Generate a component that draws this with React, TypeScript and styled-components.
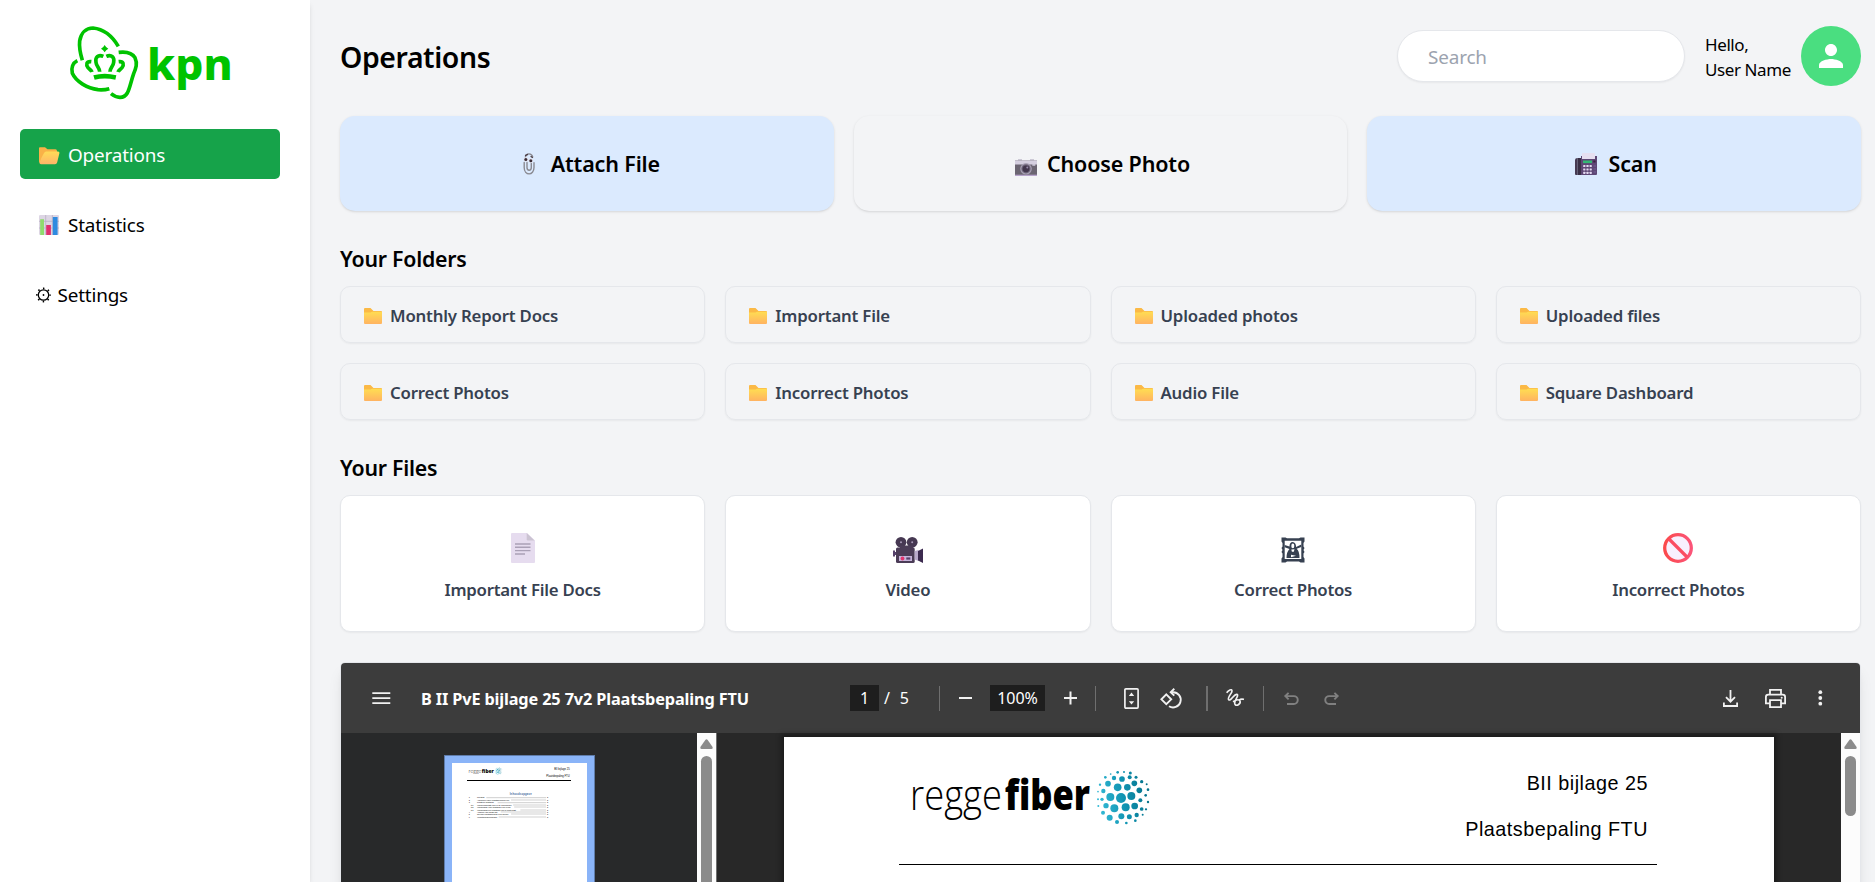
import React from 'react';
import styled, { createGlobalStyle } from 'styled-components';

const UI = '"Noto Sans", "Open Sans", sans-serif';
const INK = '#f1f1f1';

const Global = createGlobalStyle`
  *, *::before, *::after { box-sizing: border-box; }
  body { margin: 0; background: #f3f4f6; font-family: ${UI}; color: #000; overflow: hidden; }
  svg { display: block; flex: none; overflow: visible; }
`;

/* ---------- page frame ---------- */

const Page = styled.div`
  display: flex;
  height: 882px;
  overflow: hidden;
`;
const Sidebar = styled.aside`
  flex: none;
  width: 310px;
  padding: 26px 30px 0 20px;
  background: #fff;
  box-shadow: 0 4px 6px -1px rgba(0, 0, 0, 0.1), 0 2px 4px -2px rgba(0, 0, 0, 0.1);
`;
const Brand = styled.div`
  display: flex;
  padding-left: 49px;
  height: 103px;
`;
const Nav = styled.nav`
  display: flex;
  flex-direction: column;
  gap: 20px;
`;
const NavItem = styled.a<{ $active?: boolean; $tight?: boolean }>`
  display: flex;
  align-items: center;
  gap: ${(p) => (p.$tight ? 5.5 : 8)}px;
  height: 50px;
  padding: 1px 0 0 ${(p) => (p.$tight ? 16 : 19)}px;
  border-radius: 5px;
  background: ${(p) => (p.$active ? '#16a34a' : 'transparent')};
  color: ${(p) => (p.$active ? '#fff' : '#000')};
  font-size: 18.9px;
  letter-spacing: -0.18px;
`;

const Main = styled.main`
  flex: 1;
  min-width: 0;
  padding: 26px 14px 0 30px;
`;
const Header = styled.header`
  display: flex;
  align-items: center;
  height: 60px;
`;
const Title = styled.h1`
  flex: 1;
  margin: 0;
  padding-top: 2px;
  font-size: 28.4px;
  font-weight: 600;
  line-height: 40px;
  letter-spacing: -0.4px;
`;
const Search = styled.input`
  width: 288px;
  height: 52px;
  padding: 1px 30px 0;
  border: 1px solid #e5e7eb;
  border-radius: 26px;
  background: #fff;
  box-shadow: 0 1px 2px rgba(0, 0, 0, 0.05);
  font: 400 18.9px ${UI};
  letter-spacing: -0.15px;
  outline: none;
  &::placeholder { color: #9ca3af; opacity: 1; }
`;
const Greeting = styled.div`
  width: 96px;
  margin-left: 20px;
  padding-top: 2px;
  font-size: 17px;
  line-height: 25px;
  letter-spacing: -0.4px;
  white-space: nowrap;
`;
const Avatar = styled.div`
  display: flex;
  align-items: center;
  justify-content: center;
  width: 60px;
  height: 60px;
  border-radius: 50%;
  background: #4ade80;
`;

/* ---------- cards ---------- */

const Grid = styled.div<{ $cols: number }>`
  display: grid;
  grid-template-columns: repeat(${(p) => p.$cols}, 1fr);
  gap: 20px;
`;
const Actions = styled(Grid)`
  margin-top: 30px;
`;
const ActionCard = styled.button<{ $tint?: boolean; $gap: number }>`
  display: flex;
  align-items: center;
  justify-content: center;
  gap: ${(p) => p.$gap}px;
  height: 95px;
  padding: 0 0 0 4px;
  border: 0;
  border-radius: 15px;
  background: ${(p) => (p.$tint ? '#dbeafe' : '#f3f4f6')};
  box-shadow: 0 1px 3px rgba(0, 0, 0, 0.1), 0 1px 2px -1px rgba(0, 0, 0, 0.1);
  font: 590 21.5px ${UI};
  letter-spacing: -0.15px;
  color: #000;
`;
const SectionTitle = styled.h2`
  margin: 30px 0 9px;
  font-size: 21.3px;
  font-weight: 590;
  line-height: 36px;
  letter-spacing: -0.25px;
`;
const FolderCard = styled.div`
  display: flex;
  align-items: center;
  gap: 8px;
  height: 57px;
  padding: 1px 23px 0;
  border: 1px solid #e5e7eb;
  border-radius: 10px;
  box-shadow: 0 1px 2px rgba(0, 0, 0, 0.05);
  font-size: 16.8px;
  font-weight: 580;
  letter-spacing: -0.19px;
  color: #374151;
`;
const FileCard = styled.div`
  display: flex;
  flex-direction: column;
  align-items: center;
  height: 137px;
  padding-top: 36px;
  border: 1px solid #e5e7eb;
  border-radius: 10px;
  background: #fff;
  box-shadow: 0 1px 2px rgba(0, 0, 0, 0.05);
  font-size: 16.8px;
  font-weight: 580;
  line-height: 27px;
  letter-spacing: -0.25px;
  color: #374151;
`;
const FileIcon = styled.div`
  display: flex;
  height: 44px;
  padding-top: 0.5px;
`;

/* ---------- document viewer ---------- */

const Viewer = styled.section`
  margin-top: 30px;
  border: 1px solid #e5e7eb;
  border-radius: 5px;
  overflow: hidden;
  box-shadow: 0 10px 15px -3px rgba(0, 0, 0, 0.1), 0 4px 6px -4px rgba(0, 0, 0, 0.1);
  height: 720px;
`;
const Toolbar = styled.div`
  display: flex;
  align-items: center;
  height: 70px;
  background: #3c3c3c;
  color: #fff;
  font-size: 16px;
  letter-spacing: -0.1px;
`;
const ToolStart = styled.div`
  display: flex;
  align-items: center;
  gap: 30px;
  width: 509px;
  padding-left: 31px;
`;
const DocName = styled.div`
  padding-top: 1px;
  font-size: 16.3px;
  font-weight: 700;
  letter-spacing: -0.14px;
  line-height: 24px;
`;
const ToolMiddle = styled.div`
  display: flex;
  align-items: center;
  flex: 1;
`;
const Field = styled.div<{ $w: number }>`
  width: ${(p) => p.$w}px;
  height: 26px;
  background: #1e1e1e;
  color: #fff;
  line-height: 26px;
  text-align: center;
`;
const PageTotal = styled.div`
  display: flex;
  gap: 10px;
  width: 60px;
  padding-left: 5px;
  line-height: 26px;
`;
const Rule = styled.div<{ $w?: number }>`
  width: ${(p) => p.$w ?? 1}px;
  height: 25px;
  background: #6f6f6f;
`;
const Tool = styled.div<{ $ml: number; $dim?: boolean }>`
  margin-left: ${(p) => p.$ml}px;
  color: ${(p) => (p.$dim ? '#808080' : INK)};
`;
const ToolEnd = styled.div`
  display: flex;
  align-items: center;
  gap: 27px;
  padding-right: 37px;
  color: ${INK};
`;
const Panes = styled.div`
  display: flex;
  height: 650px;
`;
const Thumbs = styled.div`
  display: flex;
  justify-content: center;
  align-items: flex-start;
  width: 356px;
  padding: 22px 0 0 1px;
  background: #28292a;
`;
const Thumb = styled.div`
  border: 1px solid #5f7caa;
  width: 151px;
  height: 214px;
  padding: 7px;
  background: #8ab4f8;
`;
const Track = styled.div`
  display: flex;
  flex-direction: column;
  align-items: center;
  gap: 7px;
  width: 19px;
  padding-top: 6px;
  background: #fcfcfc;
`;
const Handle = styled.div<{ $h: number }>`
  width: 11px;
  height: ${(p) => p.$h}px;
  border-radius: 6px;
  background: #8b8b8b;
`;
const Canvas = styled.div`
  flex: 1;
  display: flex;
  justify-content: center;
  align-items: flex-start;
  padding: 4px 0 0;
  border-left: 1px solid #6f6f6f;
  background: #282828;
`;
const Sheet = styled.div`
  width: 990px;
  height: 700px;
  padding: 34px 117px 0 115px;
  background: #fff;
  box-shadow: 0 0 5px 3px rgba(0, 0, 0, 0.35);
`;
const SheetHead = styled.div`
  display: flex;
  justify-content: space-between;
  height: 94px;
  padding: 0 9px 0 13px;
  border-bottom: 1px solid #000;
`;
const SheetTitles = styled.div`
  margin-top: -11px;
  font: 19.8px/46px "Liberation Sans", Arial, sans-serif;
  letter-spacing: 0.5px;
  text-align: right;
`;

/* ---------- drawings ---------- */

const KpnLogo = () => (
  <svg width="164" height="74" viewBox="207 77 492 222">
    <g fill="none" stroke="#00c300" strokeWidth="11">
      <path d="M247 180C241 160 237 140 239 122C243 98 258 83 279 83C309 86 336 106 355 138" />
      <path d="M356 156C380 153 398 160 405 172C413 190 408 203 401 220C392 246 390 262 382 278C371 297 349 293 333 280" />
      <path d="M232 181C218 188 213 203 217 219C228 244 262 264 294 268C306 269 318 268 328 265" />
    </g>
    <g fill="#00c300">
      <path d="M314 134Q318 142 325 145Q318 148 314 156Q310 148 303 145Q310 142 314 134Z" />
      <path d="M280 225Q314 215 349 225L346 238Q314 231 284 238Z" />
    </g>
    <g fill="none" stroke="#00c300" strokeWidth="11">
      <path d="M310 168C294 161 285 171 288 186C289 198 299 203 299 214" />
      <path d="M319 168C335 161 344 171 341 186C340 198 330 203 330 214" />
      <path d="M274 184C258 182 258 194 264 202C269 208 274 209 276 215" />
      <path d="M356 184C372 182 372 194 366 202C361 208 356 209 354 215" />
    </g>
    <text x="441" y="240" fontFamily='"Noto Sans", sans-serif' fontWeight="800" fontSize="126" textLength="257" lengthAdjust="spacingAndGlyphs" fill="#00c300">kpn</text>
  </svg>
);

const OpenFolder = () => (
  <svg width="21" height="18" viewBox="0 0 21 18">
    <defs><linearGradient id="of" x1="0" y1="0" x2="0" y2="1"><stop offset="0" stopColor="#ffdb57" /><stop offset="1" stopColor="#ffb469" /></linearGradient></defs>
    <g transform="translate(0 1)">
      <path d="M0 1Q0 0.3 1 0.3H6L8.5 2.3H16.5Q18 2.3 18 4V16H2Q0 16 0 14.5Z" fill="#f9b248" />
      <path d="M7.2 4.6H19Q20.8 4.6 20.4 6.2L18.2 15.3Q17.7 17.3 16 17.3H2Q0.2 17.3 0.6 15.5L2.6 10.5Q3.6 8.5 4.8 6.6Q5.8 4.6 7.2 4.6Z" fill="url(#of)" />
    </g>
  </svg>
);
const BarChart = () => (
  <svg width="21" height="20" viewBox="0 0 21 20">
    <rect width="20" height="20" rx="1.2" fill="#ddd6e4" />
    <path d="M0 6.3H20M0 13H20M6.7 0V20M13.4 0V20" stroke="#b9b1c4" strokeWidth="0.8" />
    <path d="M1.2 4.2H5V20H1.2Z" fill="#8fdc6d" />
    <path d="M7.2 10H11.9V20H7.2Z" fill="#e0306e" />
    <path d="M13.8 2H18.6V20H13.8Z" fill="#2f8be0" />
  </svg>
);
const Gear = () => (
  <svg width="16" height="16" viewBox="0 0 16 16">
    <g fill="none" stroke="#000">
      <circle cx="7.5" cy="8" r="5.2" strokeWidth="1.3" />
      <circle cx="7.5" cy="8" r="6.6" strokeWidth="1.6" strokeDasharray="1.5 3.684" strokeDashoffset="0.75" />
    </g>
    <circle cx="7.5" cy="8" r="0.9" />
  </svg>
);
const Person = () => (
  <svg width="36" height="36" viewBox="0 0 24 24" fill="#fff">
    <path d="M12 12c2.21 0 4-1.79 4-4s-1.79-4-4-4-4 1.79-4 4 1.79 4 4 4zm0 2c-2.67 0-8 1.34-8 4v2h16v-2c0-2.66-5.33-4-8-4z" />
  </svg>
);
const Paperclip = () => (
  <svg width="22" height="22" viewBox="-5 0 22 22">
    <g fill="none" stroke="#8a8a92" strokeWidth="1.4" strokeLinecap="round">
      <path d="M1.2 9.5V14.5C1.2 23 11 23 11 14.5V9.8" />
      <path d="M4 9.5V14.5C4 18.2 8.3 18.2 8.3 14.5V10.5" />
      <path d="M2.4 4C3 0 8.6 -0.4 9.7 4" />
    </g>
    <circle cx="2.9" cy="6.4" r="2.2" fill="#e4e0e8" /><circle cx="7.8" cy="7.6" r="2.2" fill="#e4e0e8" />
    <circle cx="2.8" cy="6.4" r="1.5" fill="#3a2c35" /><circle cx="7.8" cy="7.7" r="1.5" fill="#3a2c35" />
    <path d="M2 2.6L5 1.4M7.6 3.2L9.8 4.8" stroke="#4a3c44" strokeWidth="1.2" />
  </svg>
);
const Camera = () => (
  <svg width="22" height="22" viewBox="0 0 22 22">
    <g transform="translate(0 6)">
      <path d="M3 1H7M15 1H19" stroke="#a59db3" strokeWidth="1.2" />
      <rect y="1.5" width="22" height="15.5" fill="#6b6572" />
      <rect y="1.5" width="22" height="4" fill="#d5cfe0" />
      <rect y="15.7" width="22" height="1.3" fill="#b6a3cb" />
      <rect x="17.3" y="5.2" width="3" height="1.5" fill="#d5cfe0" />
      <circle cx="11" cy="9.8" r="5.8" fill="#a8a0b5" />
      <circle cx="11" cy="9.8" r="4.6" fill="#6d6478" />
      <circle cx="11" cy="9.8" r="3.4" fill="#42364d" />
      <circle cx="12.3" cy="8.4" r="1" fill="#9588a8" />
    </g>
  </svg>
);
const Fax = () => (
  <svg width="22" height="22" viewBox="0 0 22 22">
    <path d="M0 7Q0 5 2.5 5V22H1Q0 22 0 21Z" fill="#463a52" />
    <rect x="2.5" y="5" width="3.5" height="17" fill="#3a2f45" />
    <path d="M6 3H22V21Q22 22 21 22H6Z" fill="#5e4775" />
    <rect x="7" width="13" height="6" rx="0.5" fill="#e6dff0" />
    <rect x="8" y="7.5" width="9" height="2.6" fill="#33b874" />
    <rect x="18.3" y="7.5" width="2.2" height="2" fill="#3a1f3d" />
    <g fill="#e3d8f0">
      {[12, 15.4, 18.8].map((y) => [8.2, 11.4, 14.6].map((x) => <rect key={`${x}-${y}`} x={x} y={y} width="2.2" height="2.1" rx="0.4" />))}
    </g>
    <path d="M18.6 13H21M18.6 16H21M18.6 19H21" stroke="#7c68a0" strokeWidth="0.8" />
  </svg>
);
const Folder = () => (
  <svg width="18" height="16" viewBox="0 0 18 16">
    <defs><linearGradient id="cf" x1="0" y1="0" x2="0" y2="1"><stop offset="0" stopColor="#ffdd52" /><stop offset="1" stopColor="#ffb361" /></linearGradient></defs>
    <g transform="translate(0 1)">
      <path d="M0 1Q0 0 1 0H6.5L9.5 3H17Q18 3 18 4V8H0Z" fill="#fbb946" />
      <path d="M0 4.6H6.5L8 3.8H17.2Q18 3.8 18 4.6V15Q18 16 17 16H1Q0 16 0 15Z" fill="url(#cf)" />
    </g>
  </svg>
);
const Doc = () => (
  <svg width="24" height="30" viewBox="0 0 24 30">
    <path d="M1 0H16L24 7.5V29Q24 30 23 30H1Q0 30 0 29V1Q0 0 1 0Z" fill="#e6dcef" />
    <path d="M15.7 0L23.5 7.5H17Q15.7 7.5 15.7 6.3Z" fill="#cbc3d2" />
    <path d="M4 11H19.5M4 14.3H19.5M4 17.6H19.5M4 21H14" stroke="#aaa0b6" strokeWidth="1.4" />
  </svg>
);
const Movie = () => (
  <svg width="30" height="30" viewBox="0 0 30 30">
    <circle cx="8" cy="9.3" r="5.4" fill="#463852" /><circle cx="19.2" cy="9.3" r="5.4" fill="#463852" />
    <circle cx="8" cy="9.3" r="1" fill="#a99bb8" /><circle cx="19.2" cy="9.3" r="1" fill="#a99bb8" />
    <rect x="0" y="17.5" width="2" height="6" fill="#55406b" /><rect x="2" y="19" width="2" height="3" fill="#55406b" />
    <rect x="7" y="12.5" width="13" height="4" fill="#4b3c57" />
    <rect x="3" y="14.5" width="18.7" height="15.5" rx="1.5" fill="#4b3c57" />
    <path d="M21.7 18L25.5 17V28L21.7 26.5Z" fill="#b9a9cc" />
    <path d="M25 18L30 15.5V30L25 27.5Z" fill="#3c2a4f" />
    <rect x="6" y="23" width="13" height="5" fill="#c6b3da" />
    <circle cx="9.5" cy="25.5" r="1.9" fill="#e0356f" /><rect x="13.3" y="24.4" width="4" height="2.2" fill="#55406b" />
  </svg>
);
const Portrait = () => (
  <svg width="24" height="30" viewBox="0 0 24 30">
    <g transform="translate(0.5 4.5)" fill="#374151">
      <path fillRule="evenodd" d="M0 0H4L5.5 0.8H17.5L19 0H23V4L22 5.5V9L23 10.5L22 12.5L23 14.5L22 16V19.5L23 21V25H19L17.5 24H5.5L4 25H0V21L1 19.5V16L0 14.5L1 12.5L0 10.5L1 9V5.5L0 4ZM3.2 3.2V21.4H19.8V3.2Z" />
      <path d="M3.2 7.5L8 9Q8 4.4 11.2 4.4Q14.5 4.6 14.6 9.5L19.8 7V9.5L15.2 11.2Q18 13.5 18 20.4H5Q5 14.5 8 11.5L3.2 9.7Z" />
      <ellipse cx="11.3" cy="8.4" rx="1.5" ry="2.3" fill="#fff" />
      <path d="M9.8 12L13 11.8L12.3 14.2H10.4ZM9.5 17.2L14.5 18.3L9.5 19.8Z" fill="#fff" />
    </g>
  </svg>
);
const Prohibited = () => (
  <svg width="30" height="30" viewBox="0 0 30 30">
    <defs><linearGradient id="pr" x1="0" y1="0" x2="1" y2="0"><stop offset="0" stopColor="#fb4a4c" /><stop offset="1" stopColor="#fb5478" /></linearGradient></defs>
    <circle cx="15" cy="15" r="13.3" fill="#f8f0fe" stroke="url(#pr)" strokeWidth="3.3" />
    <path d="M6 6L24 24" stroke="#fb4d62" strokeWidth="3.2" />
  </svg>
);
const Arrow = () => (
  <svg width="13" height="10" viewBox="0 0 13 10"><path d="M5.3 1Q6.5 -0.6 7.7 1L12.6 8Q13.2 10 11.5 10H1.5Q-0.2 10 0.4 8Z" fill="#8b8b8b" /></svg>
);

const DOTS: [number, number, number][] = [
  [843, 428, 15], [833, 396, 11.5], [862, 396, 10], [874, 422, 12], [811, 425, 12], [823, 459, 12], [857, 456, 12], [884, 452, 10],
  [898, 405, 8.5], [883, 384, 8.5], [846, 371, 8.5], [804, 385, 8.5], [790, 407, 6.5], [786, 432, 5], [798, 451, 8], [789, 472, 6],
  [809, 487, 9], [844, 483, 9], [868, 484, 7.5], [890, 479, 6.5], [905, 461, 5.5], [901, 435, 6], [917, 420, 4], [905, 379, 5],
  [888, 366, 4.5], [869, 366, 6], [822, 368, 6.5], [796, 366, 4], [833, 351, 4], [852, 350, 3], [871, 353, 4.5], [780, 388, 3.5],
  [774, 409, 2.5], [774, 432, 3], [775, 452, 3], [831, 500, 6], [859, 503, 4], [886, 496, 4], [908, 478, 3], [918, 462, 3.5],
  [924, 440, 3.5], [924, 403, 4], [920, 387, 3], [812, 356, 2.5],
];
const ReggefiberMark = () => (
  <>
    <defs><linearGradient id="gl" gradientUnits="userSpaceOnUse" x1="770" y1="440" x2="928" y2="415"><stop offset="0" stopColor="#36bcd8" /><stop offset="0.5" stopColor="#1195b3" /><stop offset="1" stopColor="#04718a" /></linearGradient></defs>
    <text y="465" fontFamily='"Open Sans", sans-serif'>
      <tspan x="210" fontWeight="300" fontSize="128" textLength="276" lengthAdjust="spacingAndGlyphs">regge</tspan>
      <tspan x="494" fontWeight="800" fontSize="128" textLength="256" lengthAdjust="spacingAndGlyphs">fiber</tspan>
    </text>
    <g fill="url(#gl)">{DOTS.map(([x, y, r]) => <circle key={`${x}-${y}`} cx={x} cy={y} r={r} />)}</g>
  </>
);
const ReggefiberLogo = () => (
  <svg width="240" height="54" viewBox="216 347 720 162"><ReggefiberMark /></svg>
);

const TOC: [number, string, string, number][] = [
  [0, '1', 'Inleiding', 428], [0, '2', 'Algemene eisen plaatsbepaling FTU', 435], [0, '3', 'Plaats bij plaatsing', 443],
  [6, '3.1', 'Voorkeursplaats FTU in de woonkamer', 450], [6, '3.2', 'Voorwaarde voor plaatsing FTU in hal', 456], [6, '3.3', 'Voorwaarden bij plaatsing FTU in meterkast', 465],
  [0, '4', 'Afwijken van bijlage 25', 471], [0, '5', 'Overige plaatsbepaling FTU binnen', 477], [0, '6', 'Verantwoordelijkheden', 486],
];
const ThumbSheet = () => (
  <svg width="135" height="198" viewBox="366 324 405 594" fontFamily='"Liberation Sans", sans-serif'>
    <rect x="366" y="324" width="405" height="594" fill="#fff" />
    <svg x="416" y="336" width="101" height="24" viewBox="213 347 720 162"><ReggefiberMark /></svg>
    <text x="719" y="345" textAnchor="end" fontSize="8">BII bijlage 25</text>
    <text x="719" y="366" textAnchor="end" fontSize="8">Plaatsbepaling FTU</text>
    <rect x="411" y="375" width="312" height="3" />
    <text x="539" y="419" fontSize="8" fontWeight="700" fill="#44699c" textLength="66">Inhoudsopgave</text>
    {TOC.map(([indent, no, label, y]) => (
      <g key={no} fontSize="6">
        <text x={416 + indent} y={y + 2}>{no}</text>
        <text x="441" y={y + 2}>{label}</text>
        <path d={`M${441 + label.length * 3.1} ${y}H648`} stroke="#888" strokeWidth="1.2" />
        <text x="651" y={y + 2}>2</text>
      </g>
    ))}
  </svg>
);

const MenuIcon = () => (
  <svg width="19" height="13" viewBox="0 0 19 13"><path d="M0.3 1.2H18.3M0.3 6.2H18.3M0.3 11.2H18.3" stroke={INK} strokeWidth="1.7" /></svg>
);
const stroke = { fill: 'none', stroke: 'currentColor', strokeWidth: 2 } as const;
const Minus = () => <svg width="13" height="14" viewBox="0 0 13 14"><path d="M0 7H13" {...stroke} /></svg>;
const Plus = () => <svg width="13" height="14" viewBox="0 0 13 14"><path d="M0 7H13M6.5 0.5V13.5" {...stroke} /></svg>;
const FitPage = () => (
  <svg width="15" height="21" viewBox="0 0 15 21">
    <rect x="0.9" y="0.9" width="13.2" height="19.2" rx="1" {...stroke} strokeWidth="1.7" />
    <path d="M4.8 8H10.2L7.5 4.6ZM4.8 13.2H10.2L7.5 16.6Z" fill="currentColor" />
  </svg>
);
const RotateIcon = () => (
  <svg width="22" height="21" viewBox="0 0 22 21">
    <path d="M6.3 6.4L11.2 11.3L6.3 16.2L1.4 11.3Z" {...stroke} strokeWidth="1.9" />
    <path d="M14.3 0.8L10.7 4.2L14.3 7.6" {...stroke} strokeWidth="1.9" />
    <path d="M11 4.2H13A7.6 7.6 0 1 1 9 18.2" {...stroke} strokeWidth="1.9" />
  </svg>
);
const DrawIcon = () => (
  <svg width="18" height="18" viewBox="1159 104 54 54">
    <path d="M1161 115C1166 108 1177 102 1177 110C1177 117 1162 130 1167 136C1173 142 1183 118 1192 120C1200 123 1180 142 1186 150C1192 157 1204 148 1201 140C1197 132 1185 139 1180 142M1199 137C1203 133 1207 134 1213 135" {...stroke} strokeWidth="5" />
  </svg>
);
const UndoIcon = () => (
  <svg width="15" height="14" viewBox="0 0 15 14"><path d="M4.6 1.8L1.3 5.1L4.6 8.4M1.5 5.1H9.8A3.9 3.9 0 0 1 9.8 13H3" {...stroke} strokeWidth="1.9" /></svg>
);
const RedoIcon = () => (
  <svg width="15" height="14" viewBox="0 0 15 14"><path d="M10.4 1.8L13.7 5.1L10.4 8.4M13.5 5.1H5.2A3.9 3.9 0 0 0 5.2 13H12" {...stroke} strokeWidth="1.9" /></svg>
);
const DownloadIcon = () => (
  <svg width="15" height="17" viewBox="0 0 15 17"><path d="M7.5 0V11.5M3 7.2L7.5 11.7L12 7.2M0.9 12.6V16H14.1V12.6" {...stroke} strokeWidth="1.8" /></svg>
);
const PrintIcon = () => (
  <svg width="21" height="19" viewBox="0 0 21 19">
    <path d="M5 5.4V0.9H16V5.4M5 14.3H0.9V8Q0.9 5.6 3.2 5.6H17.8Q20.1 5.6 20.1 8V14.3H16M5 11.2H16V18.1H5Z" {...stroke} strokeWidth="1.8" />
    <circle cx="16.7" cy="8.8" r="1" fill="currentColor" />
  </svg>
);
const MoreIcon = () => (
  <svg width="10" height="16" viewBox="-4 0 10 16" fill="currentColor"><circle cx="3.3" cy="2.2" r="1.9" /><circle cx="3.3" cy="8" r="1.9" /><circle cx="3.3" cy="13.7" r="1.9" /></svg>
);

/* ---------- data ---------- */

const FOLDERS = ['Monthly Report Docs', 'Important File', 'Uploaded photos', 'Uploaded files', 'Correct Photos', 'Incorrect Photos', 'Audio File', 'Square Dashboard'];
const FILES: [string, () => React.ReactElement][] = [
  ['Important File Docs', Doc], ['Video', Movie], ['Correct Photos', Portrait], ['Incorrect Photos', Prohibited],
];

export default function App() {
  return (
    <Page>
      <Global />
      <Sidebar>
        <Brand><KpnLogo /></Brand>
        <Nav>
          <NavItem $active><OpenFolder />Operations</NavItem>
          <NavItem><BarChart />Statistics</NavItem>
          <NavItem $tight><Gear />Settings</NavItem>
        </Nav>
      </Sidebar>
      <Main>
        <Header>
          <Title>Operations</Title>
          <Search placeholder="Search" />
          <Greeting>Hello,<br />User Name</Greeting>
          <Avatar><Person /></Avatar>
        </Header>
        <Actions $cols={3}>
          <ActionCard $tint $gap={11}><Paperclip />Attach File</ActionCard>
          <ActionCard $gap={10}><Camera />Choose Photo</ActionCard>
          <ActionCard $tint $gap={11}><Fax />Scan</ActionCard>
        </Actions>
        <SectionTitle>Your Folders</SectionTitle>
        <Grid $cols={4}>
          {FOLDERS.map((name) => <FolderCard key={name}><Folder />{name}</FolderCard>)}
        </Grid>
        <SectionTitle>Your Files</SectionTitle>
        <Grid $cols={4}>
          {FILES.map(([name, Icon]) => <FileCard key={name}><FileIcon><Icon /></FileIcon>{name}</FileCard>)}
        </Grid>
        <Viewer>
          <Toolbar>
            <ToolStart><MenuIcon /><DocName>B II PvE bijlage 25 7v2 Plaatsbepaling FTU</DocName></ToolStart>
            <ToolMiddle>
              <Field $w={29}>1</Field>
              <PageTotal><span>/</span><span>5</span></PageTotal>
              <Rule />
              <Tool $ml={19}><Minus /></Tool>
              <Tool $ml={18}><Field $w={55}>100%</Field></Tool>
              <Tool $ml={19}><Plus /></Tool>
              <Tool $ml={18}><Rule /></Tool>
              <Tool $ml={28}><FitPage /></Tool>
              <Tool $ml={21}><RotateIcon /></Tool>
              <Tool $ml={24}><Rule $w={2} /></Tool>
              <Tool $ml={18}><DrawIcon /></Tool>
              <Tool $ml={19}><Rule /></Tool>
              <Tool $ml={20} $dim><UndoIcon /></Tool>
              <Tool $ml={25} $dim><RedoIcon /></Tool>
            </ToolMiddle>
            <ToolEnd><DownloadIcon /><PrintIcon /><MoreIcon /></ToolEnd>
          </Toolbar>
          <Panes>
            <Thumbs><Thumb><ThumbSheet /></Thumb></Thumbs>
            <Track><Arrow /><Handle $h={560} /></Track>
            <Canvas>
              <Sheet>
                <SheetHead>
                  <ReggefiberLogo />
                  <SheetTitles>BII bijlage 25<br />Plaatsbepaling FTU</SheetTitles>
                </SheetHead>
              </Sheet>
            </Canvas>
            <Track><Arrow /><Handle $h={60} /></Track>
          </Panes>
        </Viewer>
      </Main>
    </Page>
  );
}
